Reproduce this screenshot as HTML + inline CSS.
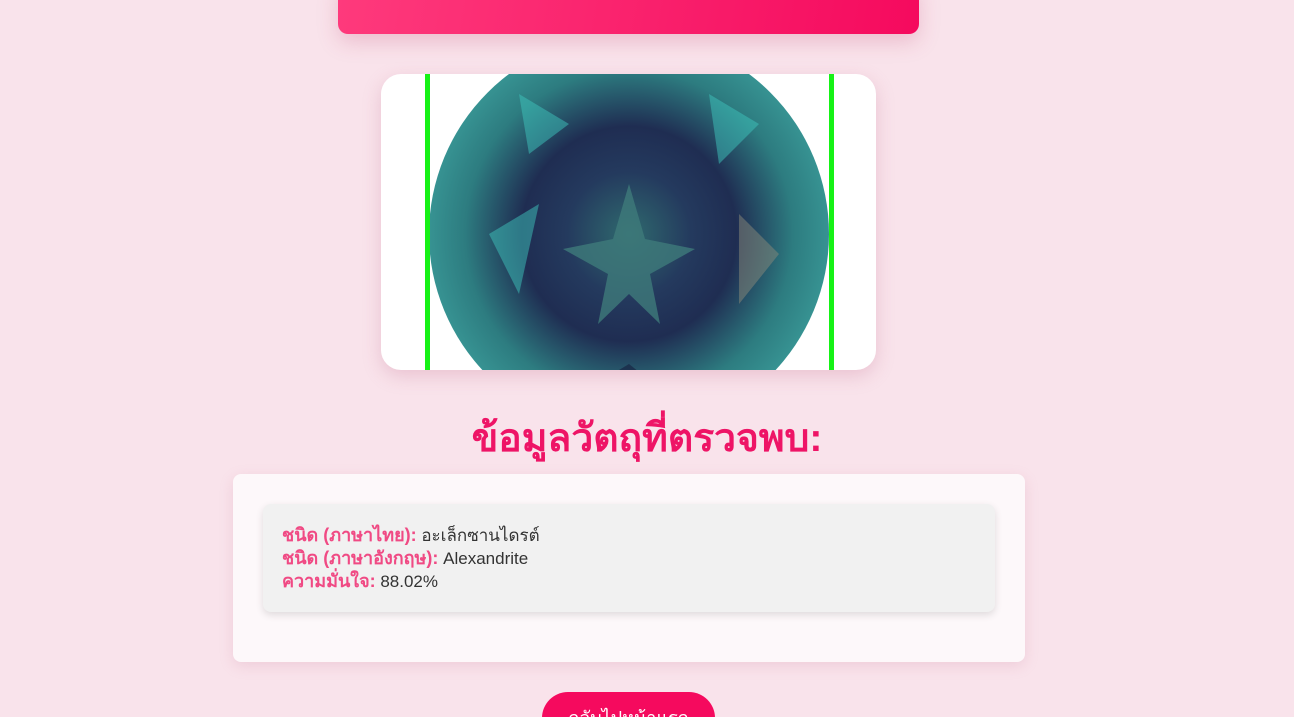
<!DOCTYPE html>
<html><head><meta charset="utf-8"><style>
html,body{margin:0;height:717px;overflow:hidden}
body{background:#f9e3eb;font-family:"Liberation Sans","Noto Sans CJK SC",sans-serif;width:1294px;position:relative}
.top{position:absolute;left:338px;top:-20px;width:581px;height:54px;border-radius:10px;background:linear-gradient(100deg,#fe3a7c,#f50a5e);box-shadow:0 8px 20px rgba(200,80,120,.25)}
.img{position:absolute;left:381px;top:74px;width:495px;height:296px;border-radius:20px;background:#fff;overflow:hidden;box-shadow:0 6px 18px rgba(200,120,150,.3)}
.g{position:absolute;left:48px;top:-40px;width:400px;height:400px;border-radius:50%;background:radial-gradient(circle at 50% 50%,#2f6a6e 0,#243a5e 22%,#1f2d52 38%,#2d7c80 58%,#3a9a98 75%,#2c5c66 92%,#555 100%)}
.gl{position:absolute;top:0;width:5px;height:296px;background:#16f216}
h2{position:absolute;top:407px;left:0;width:1294px;text-align:center;margin:0;font-size:39px;color:#ee1466;font-weight:bold}
.card{position:absolute;left:233px;top:474px;width:792px;height:188px;background:#fdf8fa;border-radius:8px;box-shadow:0 4px 14px rgba(200,120,150,.2)}
.in{position:absolute;left:30px;top:30px;width:732px;height:108px;background:#f1f1f1;border-radius:8px;box-shadow:0 3px 8px rgba(0,0,0,.12);font-size:17px;color:#333;line-height:23px;box-sizing:border-box;padding:20px 0 0 19px}
b{color:#f04a84;font-size:18px}
.btn{position:absolute;left:542px;top:692px;width:173px;height:52px;border-radius:26px;background:#f50a5e;color:#fff;font-size:18px;text-align:center;line-height:52px}
</style></head><body>
<div class="top"></div>
<div class="img">
<div class="g">
<svg width="400" height="400" viewBox="0 0 400 400" style="position:absolute;left:0;top:0">
<polygon points="200,150 216,205 266,215 221,240 231,290 200,260 169,290 179,240 134,215 184,205" fill="#3f7b7a" opacity=".8"/>
<polygon points="60,200 110,170 90,260" fill="#3dc4bc" opacity=".5"/>
<polygon points="310,180 350,220 310,270" fill="#8a8a7a" opacity=".5"/>
<polygon points="150,360 200,330 250,370" fill="#1a2a48" opacity=".8"/>
<polygon points="90,60 140,90 100,120" fill="#3dc4bc" opacity=".5"/>
<polygon points="280,60 330,90 290,130" fill="#3dc4bc" opacity=".5"/>
</svg></div>
<div class="gl" style="left:44px"></div><div class="gl" style="left:448px"></div>
</div>
<h2>ข้อมูลวัตถุที่ตรวจพบ:</h2>
<div class="card"><div class="in">
<div><b>ชนิด (ภาษาไทย):</b> อะเล็กซานไดรต์</div>
<div><b>ชนิด (ภาษาอังกฤษ):</b> Alexandrite</div>
<div><b>ความมั่นใจ:</b> 88.02%</div>
</div></div>
<div class="btn">กลับไปหน้าแรก</div>
</body></html>
